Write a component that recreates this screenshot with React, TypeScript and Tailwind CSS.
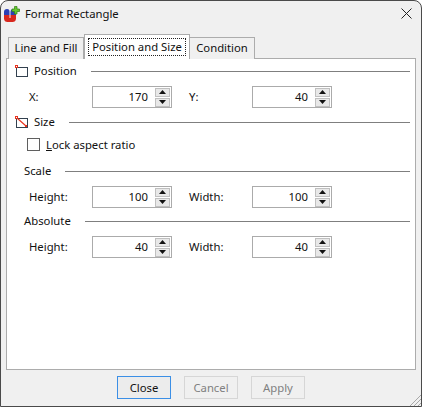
const font = "font-['Noto_Sans',sans-serif]";

const Arrow = ({ down }: { down?: boolean }) => (
  <svg width="7" height="4" viewBox="0 0 7 4" className="block">
    <path d={down ? "M0 0H7L3.5 4Z" : "M3.5 0L7 4H0Z"} fill="#111" />
  </svg>
);

const Spin = ({ value }: { value: string }) => (
  <div className="flex h-[22px] w-[80px] items-center border border-[#ababab] bg-white pr-[1px]">
    <span className="flex-1 pr-[7px] text-right">{value}</span>
    <div className="flex w-[15px] flex-col gap-[1px]">
      <div className="flex h-[9px] items-center justify-center border border-[#c0c0c0] bg-[#e8e8e8]">
        <Arrow />
      </div>
      <div className="flex h-[9px] items-center justify-center border border-[#c0c0c0] bg-[#e8e8e8]">
        <Arrow down />
      </div>
    </div>
  </div>
);

const Row = ({ a, av, b, bv, className }: { a: string; av: string; b: string; bv: string; className?: string }) => (
  <div className={`flex h-[22px] items-center pl-[22px] ${className}`}>
    <span className="w-[63px]">{a}</span>
    <Spin value={av} />
    <span className="ml-[17px] w-[63px]">{b}</span>
    <Spin value={bv} />
  </div>
);

const Heading = ({ label, icon, className }: { label: string; icon?: React.ReactNode; className?: string }) => (
  <div className={`flex h-[16px] items-center ${className}`}>
    {icon}
    <span>{label}</span>
    <div className="ml-[14px] h-[1px] flex-1 bg-[#7f7f7f]" />
  </div>
);

const PositionIcon = () => (
  <svg width="13" height="13" viewBox="0 0 13 13" className="mr-[6px] ml-[8px] shrink-0">
    <rect x="1.5" y="2.5" width="11" height="9" fill="none" stroke="#33414f" />
    <rect x="0.5" y="0.5" width="2" height="2" fill="#fff" stroke="#e8321e" />
  </svg>
);

const SizeIcon = () => (
  <svg width="13" height="13" viewBox="0 0 13 13" className="mr-[6px] ml-[8px] shrink-0">
    <rect x="1.5" y="2.5" width="11" height="9" fill="none" stroke="#33414f" />
    <path d="M2 2L11 10" stroke="#e8321e" strokeWidth="1.2" />
    <rect x="0.5" y="0.5" width="2" height="2" fill="#fff" stroke="#e8321e" />
    <rect x="10" y="9" width="2" height="2" fill="#e8321e" />
  </svg>
);

const AppIcon = () => (
  <svg width="16" height="16" viewBox="0 0 16 16" className="shrink-0">
    {/* left and right columns, joined in red at the bottom */}
    <path d="M0 6C0 4 1 3 3 3C5 3 5.5 4 5.5 6V9H0Z" fill="#2c3fb5" />
    <path d="M6.5 6C6.5 4 7.5 3 9.5 3C11.5 3 12 4 12 6V9H6.5Z" fill="#2c3fb5" />
    <path d="M0 9H5.5V12H6.5V9H12V12.5C12 15 10.5 16 8.5 16H3.5C1.5 16 0 15 0 12.5Z" fill="#d8281e" />
    <path d="M10.5 0.5H13V3H15.5V5.5H13V8H10.5V5.5H8V3H10.5Z" fill="#66c82e" stroke="#2e7d14" strokeWidth="0.7" />
  </svg>
);

export default function App() {
  return (
    <div className={`${font} relative flex h-[407px] w-[422px] flex-col overflow-hidden rounded-t-[8px] border border-[#4a4a4a] bg-[#f0f0f0] text-[11.3px] leading-none text-[#111]`}>
      {/* title bar */}
      <div className="flex h-[33px] shrink-0 items-center pb-[8px] pl-[3px] pr-[9px]">
        <AppIcon />
        <span className="ml-[5px] flex-1">Format Rectangle</span>
        <svg width="11" height="11" viewBox="0 0 11 11">
          <path d="M0.5 0.5L10.5 10.5M10.5 0.5L0.5 10.5" stroke="#222" strokeWidth="1" />
        </svg>
      </div>

      {/* tabs */}
      <div className="relative z-10 -mb-[1px] flex h-[25px] shrink-0 items-end pl-[7px]">
        <div className="flex h-[22px] w-[76px] items-center justify-center border border-b-0 border-[#acacac] bg-[#f0f0f0] pb-[2px]">Line and Fill</div>
        <div className="flex h-[25px] w-[106px] items-center justify-center border border-b-0 border-[#acacac] bg-white p-[3px]">
          <div className="flex h-full w-full items-center justify-center border border-dotted border-[#222] pb-[1px]">Position and Size</div>
        </div>
        <div className="flex h-[22px] w-[65px] items-center justify-center border border-b-0 border-l-0 border-[#acacac] bg-[#f0f0f0] pb-[2px]">Condition</div>
      </div>

      {/* panel */}
      <div className="mx-[5px] flex h-[312px] shrink-0 flex-col border border-[#acacac] bg-white pr-[5px] pt-[4px]">
        <Heading label="Position" icon={<PositionIcon />} />
        <Row a="X:" av="170" b="Y:" bv="40" className="mt-[7px]" />
        <Heading label="Size" icon={<SizeIcon />} className="mt-[6px]" />
        <label className="mt-[8px] ml-[20px] flex h-[13px] items-center">
          <span className="mr-[6px] h-[13px] w-[13px] border border-[#5f5f5f]" />
          <span><span className="underline">L</span>ock aspect ratio</span>
        </label>
        <Heading label="Scale" className="mt-[12px] pl-[17px]" />
        <Row a="Height:" av="100" b="Width:" bv="100" className="mt-[7px]" />
        <Heading label="Absolute" className="mt-[5px] pl-[17px]" />
        <Row a="Height:" av="40" b="Width:" bv="40" className="mt-[7px]" />
      </div>

      {/* footer buttons */}
      <div className="mt-[6px] flex gap-[13px] pl-[116px]">
        <div className="flex h-[23px] w-[54px] items-center justify-center border border-[#3b8fe6] bg-[#ececec]">Close</div>
        <div className="flex h-[23px] w-[54px] items-center justify-center border border-[#d6d6d6] text-[#808080]">Cancel</div>
        <div className="flex h-[23px] w-[54px] items-center justify-center border border-[#d6d6d6] text-[#808080]">Apply</div>
      </div>

      {/* resize grip */}
      <svg width="12" height="12" viewBox="0 0 12 12" className="absolute right-0 bottom-0">
        <path d="M1 12L12 1M5 12L12 5M9 12L12 9" stroke="#a8a8a8" strokeWidth="1" />
      </svg>
    </div>
  );
}
